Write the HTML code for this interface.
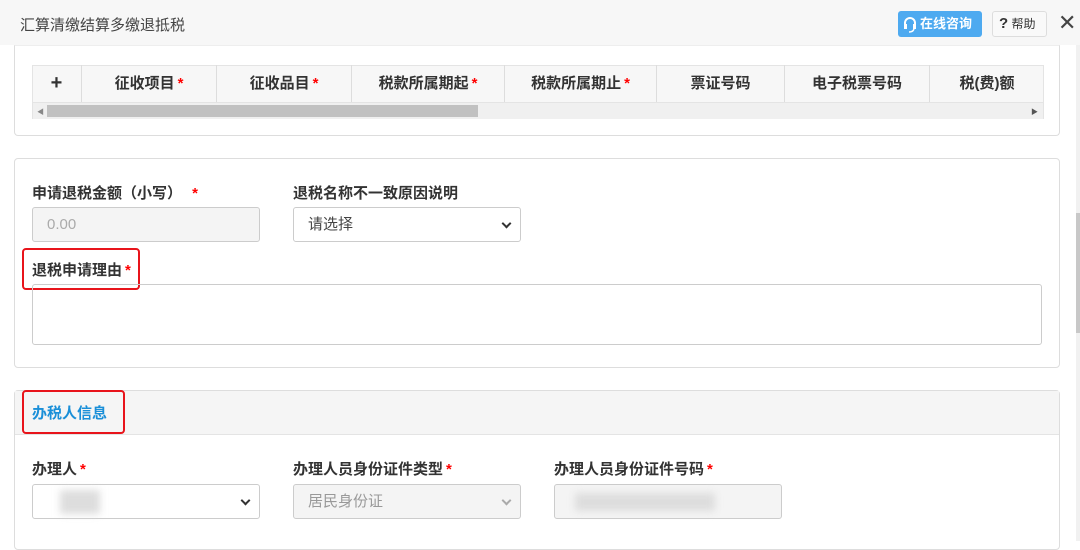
<!DOCTYPE html>
<html><head><meta charset="utf-8"><style>
*{box-sizing:border-box;margin:0;padding:0}
body{width:1080px;height:541px;overflow:hidden;background:#fff;font-family:"Liberation Sans","Noto Sans CJK SC",sans-serif;color:#333;position:relative;font-size:14px}
.abs{position:absolute}
.hdr{left:0;top:0;width:1080px;height:45px;background:#f7f7f7}
.card{border:1px solid #ddd;border-radius:4px;background:#fff}
.lbl{font-size:15px;font-weight:bold;color:#333}
.star{color:#f00;font-weight:bold;margin-left:3px}
.inp{border:1px solid #ccc;border-radius:3px;height:35px;background:#fff;font-size:15px;padding-left:14px;line-height:33px}
.dis{background:#f4f4f4;color:#aaa}
.th{top:65px;height:37px;border-right:1px solid #ddd;text-align:center;line-height:37px;font-weight:bold;font-size:15px;color:#333}
.red{border:2px solid #e8141b;border-radius:4px}
.chev{position:absolute;right:10px;top:12px;width:7px;height:7px;border-right:2px solid #333;border-bottom:2px solid #333;transform:rotate(45deg)}
</style></head><body>
<div class="abs hdr"></div>
<div class="abs" style="left:20px;top:14px;font-size:15px;color:#444">汇算清缴结算多缴退抵税</div>
<div class="abs" style="left:898px;top:11px;width:84px;height:26px;background:#4eaaf0;border-radius:3px;color:#fff;font-size:13px;font-weight:bold;line-height:26px;padding-left:22px">在线咨询</div>
<svg class="abs" style="left:902px;top:16px" width="16" height="17" viewBox="0 0 16 17"><path d="M3 10V7a5 5 0 0 1 10 0v3" fill="none" stroke="#fff" stroke-width="2"/><rect x="2" y="8" width="3" height="5" fill="#fff"/><rect x="11" y="8" width="3" height="5" fill="#fff"/><path d="M12 13q-1 3-5 3" fill="none" stroke="#fff" stroke-width="1.5"/></svg>
<div class="abs" style="left:992px;top:11px;width:55px;height:26px;border:1px solid #ddd;background:#f9f9f9;border-radius:3px;font-size:12px;line-height:24px;padding-left:6px"><b style="font-size:15px">?</b> 帮助</div>
<div class="abs" style="left:1058px;top:10px;font-size:22px;color:#444;line-height:26px">✕</div>
<div class="abs" style="left:1076px;top:45px;width:4px;height:496px;background:#f1f1f1"></div>
<div class="abs" style="left:1076px;top:213px;width:4px;height:120px;background:#c8c8c8"></div>

<div class="abs card" style="left:14px;top:45px;width:1046px;height:91px;border-top-color:#eee;border-radius:0 0 4px 4px"></div>
<div class="abs" style="left:32px;top:65px;width:1012px;height:54px;border:1px solid #e4e4e4;background:#f7f7f7"></div>
<div class="abs th" style="left:32px;width:50px;font-size:20px;font-weight:bold">+</div>
<div class="abs th" style="left:82px;width:135px">征收项目<span class="star">*</span></div>
<div class="abs th" style="left:217px;width:135px">征收品目<span class="star">*</span></div>
<div class="abs th" style="left:352px;width:153px">税款所属期起<span class="star">*</span></div>
<div class="abs th" style="left:505px;width:152px">税款所属期止<span class="star">*</span></div>
<div class="abs th" style="left:657px;width:128px">票证号码</div>
<div class="abs th" style="left:785px;width:145px">电子税票号码</div>
<div class="abs th" style="left:930px;width:114px;border:none">税(费)额</div>
<div class="abs" style="left:33px;top:102px;width:1010px;height:17px;background:#f0f0f0;border-top:1px solid #e4e4e4"></div>
<div class="abs" style="left:47px;top:105px;width:431px;height:12px;background:#c1c1c1"></div>
<div class="abs" style="left:37px;top:107px;font-size:7px;color:#888">◀</div>
<div class="abs" style="left:1031px;top:107px;font-size:7px;color:#555">▶</div>

<div class="abs card" style="left:14px;top:158px;width:1046px;height:210px"></div>
<div class="abs lbl" style="left:32px;top:182px">申请退税金额（小写） <span class="star" style="margin-left:6px">*</span></div>
<div class="abs lbl" style="left:293px;top:182px">退税名称不一致原因说明</div>
<div class="abs inp dis" style="left:32px;top:207px;width:228px">0.00</div>
<div class="abs inp" style="left:293px;top:207px;width:228px;color:#444">请选择<span class="chev"></span></div>
<div class="abs lbl" style="left:32px;top:259px">退税申请理由<span class="star">*</span></div>
<div class="abs red" style="left:22px;top:248px;width:118px;height:42px"></div>
<div class="abs" style="left:32px;top:284px;width:1010px;height:61px;border:1px solid #ccc;border-radius:3px"></div>

<div class="abs card" style="left:14px;top:390px;width:1046px;height:160px"></div>
<div class="abs" style="left:15px;top:391px;width:1044px;height:44px;background:#f5f5f5;border-bottom:1px solid #e4e4e4"></div>
<div class="abs" style="left:32px;top:402px;font-size:15px;color:#1a8fd8;font-weight:bold">办税人信息</div>
<div class="abs red" style="left:22px;top:390px;width:103px;height:44px"></div>
<div class="abs lbl" style="left:32px;top:458px">办理人<span class="star">*</span></div>
<div class="abs lbl" style="left:293px;top:458px">办理人员身份证件类型<span class="star">*</span></div>
<div class="abs lbl" style="left:554px;top:458px">办理人员身份证件号码<span class="star">*</span></div>
<div class="abs inp" style="left:32px;top:484px;width:228px"><span class="chev"></span></div>
<div class="abs" style="left:60px;top:490px;width:40px;height:24px;background:#ddd;filter:blur(4px)"></div>
<div class="abs inp dis" style="left:293px;top:484px;width:228px;color:#999">居民身份证<span class="chev" style="border-color:#aaa"></span></div>
<div class="abs inp dis" style="left:554px;top:484px;width:228px"></div>
<div class="abs" style="left:575px;top:493px;width:140px;height:18px;background:#ddd;filter:blur(4px)"></div>
</body></html>
